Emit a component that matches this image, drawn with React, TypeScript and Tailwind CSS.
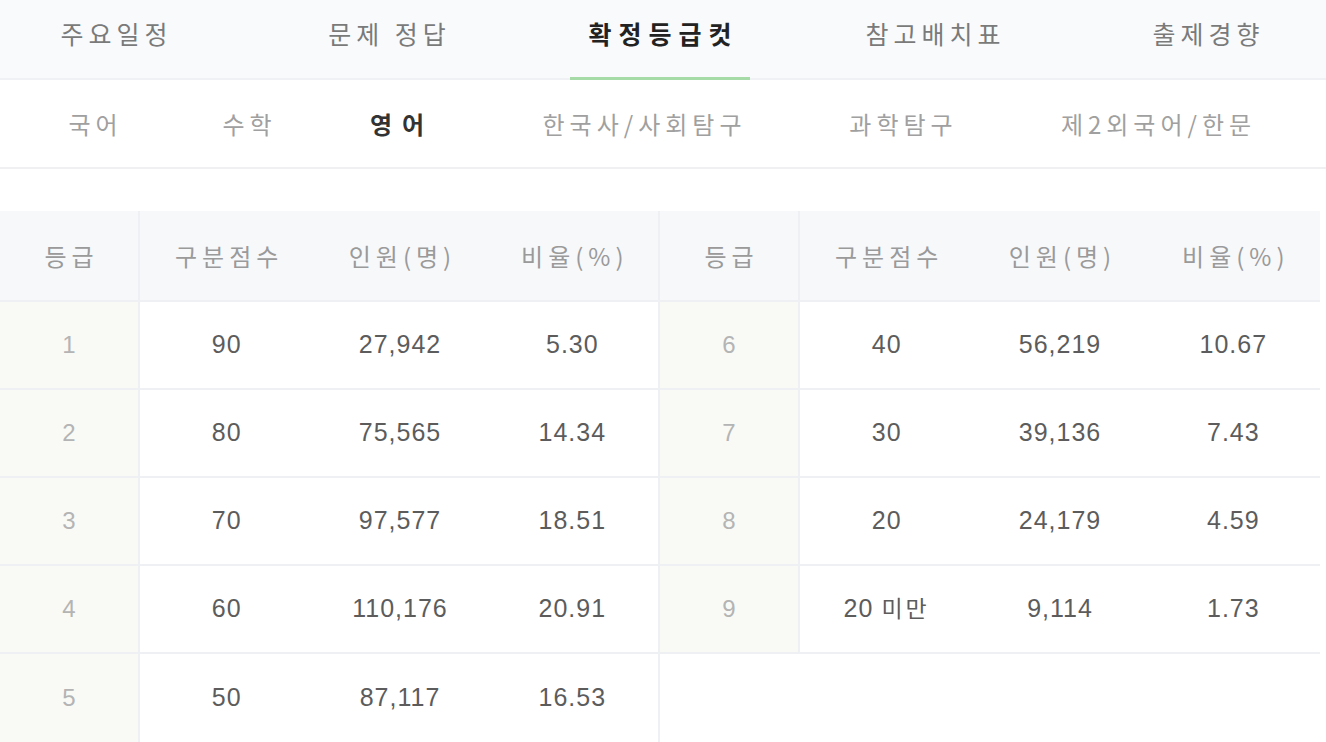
import React from "react";

const topTabs = ["주요일정", "문제 정답", "확정등급컷", "참고배치표", "출제경향"];
const subTabs = ["국어", "수학", "영어", "한국사/사회탐구", "과학탐구", "제2외국어/한문"];
const headers = ["등급", "구분점수", "인원(명)", "비율(%)"];

const left = [
  ["1", "90", "27,942", "5.30"],
  ["2", "80", "75,565", "14.34"],
  ["3", "70", "97,577", "18.51"],
  ["4", "60", "110,176", "20.91"],
  ["5", "50", "87,117", "16.53"],
];
const right: (string[] | null)[] = [
  ["6", "40", "56,219", "10.67"],
  ["7", "30", "39,136", "7.43"],
  ["8", "20", "24,179", "4.59"],
  ["9", "20 미만", "9,114", "1.73"],
  null,
];

const kr = "font-['Noto_Sans_CJK_KR','Noto_Sans',sans-serif]";
const num = "font-['Liberation_Sans','Noto_Sans_CJK_KR',sans-serif]";

function HeadCell({ text, first, sepRight }: { text: string; first?: boolean; sepRight?: boolean }) {
  return (
    <div
      className={`flex items-center justify-center h-[91px] bg-[#f7f8fa] border-b-2 border-[#eef0f4] text-[#9a9a9a] text-[24px] tracking-[5px] ${kr} ${
        first || sepRight ? "border-r-2" : ""
      }`}
    >
      <span className="pl-[5px]">{text}</span>
    </div>
  );
}

function Row({ data, sepRight, last }: { data: string[] | null; sepRight?: boolean; last?: boolean }) {
  if (!data) {
    return (
      <>
        <div className="h-[88px]" />
        <div className="h-[88px]" />
        <div className="h-[88px]" />
        <div className="h-[88px]" />
      </>
    );
  }
  const bb = last ? "" : "border-b-2";
  return (
    <>
      <div
        className={`flex items-center justify-center h-[88px] bg-[#f9faf6] ${bb} border-r-2 border-[#eef0f4] text-[#b4b4b4] text-[24px] ${num}`}
      >
        {data[0]}
      </div>
      {data.slice(1).map((v, i) => (
        <div
          key={i}
          className={`flex items-center justify-center h-[88px] ${bb} border-[#eef0f4] text-[#5c5c5c] text-[25px] tracking-[1px] ${num} ${
            sepRight && i === 2 ? "border-r-2" : ""
          }`}
        >
          {v.includes("미만") ? (
            <span>
              20 <span className={`${kr} tracking-[3px] text-[23px]`}>미만</span>
            </span>
          ) : (
            v
          )}
        </div>
      ))}
    </>
  );
}

export default function App() {
  return (
    <div className={`w-[1326px] h-[742px] overflow-hidden bg-white ${kr}`}>
      {/* top tabs */}
      <div className="relative flex justify-between items-center h-[80px] pl-[24px] pr-[30px] bg-[#f9fafc] border-b-2 border-[#f0f1f4]">
        {topTabs.map((t, i) => (
          <div key={t} className="relative w-[180px] h-full flex items-center justify-center">
            <span
              className={`pb-[10px] whitespace-nowrap ${
                i === 2
                  ? "font-bold text-[#222] text-[25px] tracking-[7px] pl-[7px]"
                  : "text-[#7a7a7a] text-[25px] tracking-[5px] pl-[5px]"
              }`}
            >
              {t}
            </span>
            {i === 2 && <div className="absolute left-0 right-0 bottom-[-2px] h-[3px] bg-[#a6dba8]" />}
          </div>
        ))}
      </div>
      {/* sub tabs */}
      <div className="grid grid-cols-[186px_122px_178px_312px_206px_304px] items-center h-[89px] border-b-2 border-[#f0f0f2]">
        {subTabs.map((t, i) => (
          <div key={t} className="flex justify-center">
            <span
              className={`text-[24px] whitespace-nowrap ${
                i === 2
                  ? "font-bold text-[#333] tracking-[10px] pl-[10px]"
                  : "text-[#a0a0a0] tracking-[5px] pl-[5px]"
              }`}
            >
              {t}
            </span>
          </div>
        ))}
      </div>
      {/* table */}
      <div className="mt-[42px] w-[1320px] grid grid-cols-[140px_1fr_1fr_1fr_140px_1fr_1fr_1fr]">
        {headers.map((h, i) => (
          <HeadCell key={"l" + i} text={h} first={i === 0} sepRight={i === 3} />
        ))}
        {headers.map((h, i) => (
          <HeadCell key={"r" + i} text={h} first={i === 0} />
        ))}
        {left.map((l, idx) => (
          <React.Fragment key={idx}>
            <Row data={l} sepRight last={idx === 4} />
            <Row data={right[idx]} />
          </React.Fragment>
        ))}
      </div>
    </div>
  );
}
